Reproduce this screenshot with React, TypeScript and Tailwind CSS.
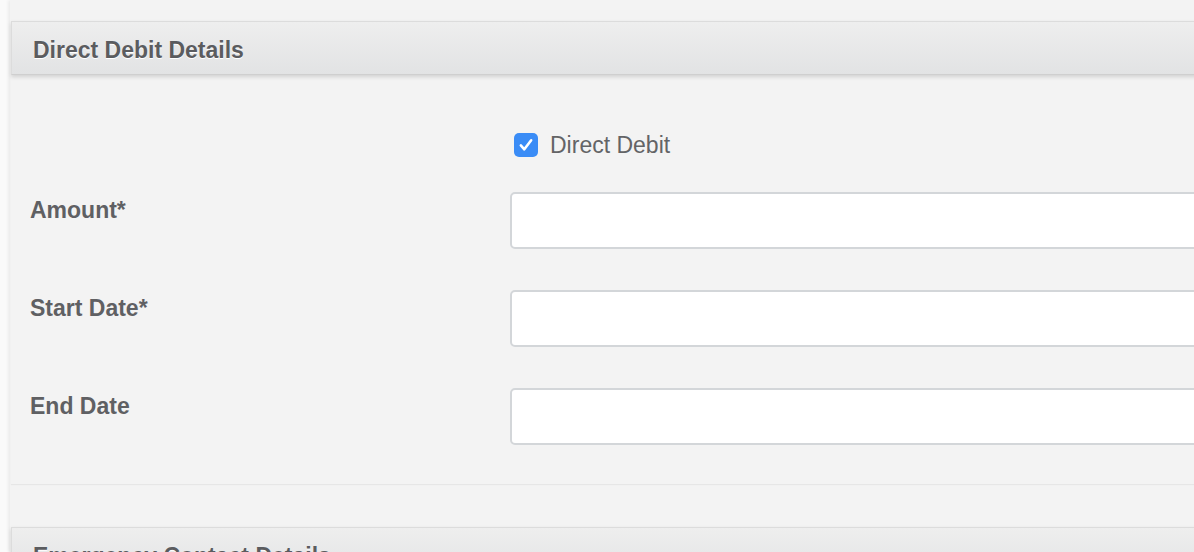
import React from "react";

const font = { fontFamily: '"Liberation Sans", Arial, Helvetica, sans-serif' };

function Header({ title }: { title: string }) {
  return (
    <div className="ml-[1px] w-[1260px] h-[54px] flex items-center pt-[4px] pl-[21px] border border-[#dcdcdc] border-b-[#cfcfcf] bg-gradient-to-b from-[#eeeeee] to-[#e2e3e4] shadow-[0_2px_4px_rgba(0,0,0,0.14)]">
      <span className="text-[23px] leading-[26px] font-bold text-[#5b5c5f] [text-shadow:0_1px_0_#ffffff]">{title}</span>
    </div>
  );
}

function Row({ label }: { label: string }) {
  return (
    <div className="flex items-start">
      <div className="w-[480px] shrink-0 pt-[5px] text-[23px] leading-[26px] font-bold text-[#5f6063]">{label}</div>
      <div className="w-[720px] h-[57px] shrink-0 bg-white border-2 border-[#d3d6d9] rounded-[5px]" />
    </div>
  );
}

export default function App() {
  return (
    <div className="w-[1194px] h-[552px] overflow-hidden flex bg-[#f3f3f3]" style={font}>
      <div className="w-[10px] shrink-0 bg-[#fafafa]" />
      <div className="flex-1 bg-[#f3f3f3] pt-[21px] shadow-[-2px_0_3px_rgba(0,0,0,0.06)] relative">
        <Header title="Direct Debit Details" />
        <div className="ml-[1px] w-[1260px] h-[409px] pl-[19px] pt-[57px] shadow-[0_1px_1px_rgba(0,0,0,0.05)]">
          <div className="flex items-center">
            <div className="w-[480px] shrink-0" />
            <div className="ml-[4px] w-[24px] h-[24px] rounded-[5px] bg-[#3a8cf6] flex items-center justify-center">
              <svg width="18" height="18" viewBox="0 0 16 16" fill="none">
                <path d="M3.4 8.4 L6.5 11.8 L12.6 3.8" stroke="white" strokeWidth="2.3" strokeLinecap="round" strokeLinejoin="round" />
              </svg>
            </div>
            <span className="ml-[12px] text-[23px] leading-[26px] text-[#636466]">Direct Debit</span>
          </div>
          <div className="mt-[34px] flex flex-col gap-[41px]">
            <Row label="Amount*" />
            <Row label="Start Date*" />
            <Row label="End Date" />
          </div>
        </div>
        <div className="h-[43px]" />
        <Header title="Emergency Contact Details" />
      </div>
    </div>
  );
}
